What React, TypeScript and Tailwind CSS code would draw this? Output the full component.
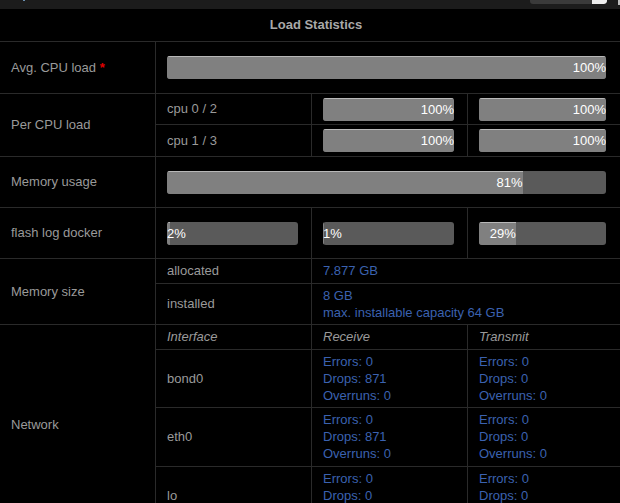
import React from "react";

const CELL = "bg-black flex items-center pl-[11px] text-[#9a9a9a]";

interface BarProps {
  pct: number;
  last?: boolean;
}

// Usage meter: dark track, lighter fill, value drawn at the end of the fill
function Bar({ pct }: BarProps) {
  return (
    <div className="relative h-[23px] w-full rounded-[3px] bg-[#5a5a5a] overflow-hidden">
      <div
        className="absolute inset-y-0 left-0 bg-[#808080] shadow-[inset_0_1px_0_#b8b8b8]"
        style={{ width: `${pct}%` }}
      />
      <div
        className="relative h-full min-w-fit flex items-center justify-end text-white leading-none whitespace-nowrap"
        style={{ width: `${pct}%` }}
      >
        {pct}%
      </div>
    </div>
  );
}

const NET = [
  { name: "bond0", rx: { errors: 0, drops: 871, overruns: 0 }, tx: { errors: 0, drops: 0, overruns: 0 } },
  { name: "eth0", rx: { errors: 0, drops: 871, overruns: 0 }, tx: { errors: 0, drops: 0, overruns: 0 } },
  { name: "lo", rx: { errors: 0, drops: 0, overruns: 0 }, tx: { errors: 0, drops: 0, overruns: 0 } },
];

function Counters({ c }: { c: { errors: number; drops: number; overruns: number } }) {
  return (
    <div className="self-start pt-[3px] leading-[17px] text-[#3b62b0]">
      <div>Errors: {c.errors}</div>
      <div>Drops: {c.drops}</div>
      <div>Overruns: {c.overruns}</div>
    </div>
  );
}

export default function App() {
  return (
    <div
      className="w-[620px] h-[503px] overflow-hidden bg-black text-[13px]"
      style={{ fontFamily: '"Liberation Sans", Arial, sans-serif' }}
    >
      {/* top bar, mostly scrolled away */}
      <div className="relative h-[9px] bg-[#1c1c1c] flex justify-end pr-[13px]">
        <div className="absolute left-[23px] top-0 w-[2px] h-[1px] bg-[#6a8fb0]" />
        <div className="flex h-[4px] w-[77px] rounded-b-[3px] bg-[#3a3a3a] overflow-hidden">
          <div className="ml-auto w-[15px] h-full bg-[#eeeeee] rounded-br-[3px]" />
        </div>
        <div className="absolute right-0 top-0 w-[2px] h-[5px] bg-[#bdbdbd]" />
      </div>

      <div className="grid grid-cols-[155px_155px_155px_1fr] grid-rows-[32px_51px_30px_31px_50px_50px_24px_40px_24px_57px_58px_58px] gap-px bg-[#2a2a2a]">
        <div className="col-span-4 bg-black flex items-center justify-center pl-[12px] font-bold text-[#a9a9a9]">
          Load Statistics
        </div>

        {/* Average CPU */}
        <div className={CELL}>
          Avg. CPU load&nbsp;<span className="font-bold text-[#e00000]">*</span>
        </div>
        <div className="col-span-3 bg-black flex items-center pl-[11px] pr-[14px]">
          <Bar pct={100} />
        </div>

        {/* Per CPU */}
        <div className={`${CELL} row-span-2`}>Per CPU load</div>
        <div className={CELL}>cpu 0 / 2</div>
        <div className="bg-black flex items-center pl-[11px] pr-[13px]">
          <Bar pct={100} />
        </div>
        <div className="bg-black flex items-center pl-[11px] pr-[14px]">
          <Bar pct={100} />
        </div>
        <div className={CELL}>cpu 1 / 3</div>
        <div className="bg-black flex items-center pl-[11px] pr-[13px]">
          <Bar pct={100} />
        </div>
        <div className="bg-black flex items-center pl-[11px] pr-[14px]">
          <Bar pct={100} />
        </div>

        {/* Memory */}
        <div className={CELL}>Memory usage</div>
        <div className="col-span-3 bg-black flex items-center pl-[11px] pr-[14px]">
          <Bar pct={81} />
        </div>

        {/* Filesystems */}
        <div className={CELL}>flash log docker</div>
        <div className="bg-black flex items-center pl-[11px] pr-[13px]">
          <Bar pct={2} />
        </div>
        <div className="bg-black flex items-center pl-[11px] pr-[13px]">
          <Bar pct={1} />
        </div>
        <div className="bg-black flex items-center pl-[11px] pr-[14px]">
          <Bar pct={29} />
        </div>

        {/* Memory size */}
        <div className={`${CELL} row-span-2`}>Memory size</div>
        <div className={CELL}>allocated</div>
        <div className="col-span-2 bg-black flex items-center pl-[11px] text-[#3b62b0]">7.877 GB</div>
        <div className={CELL}>installed</div>
        <div className="col-span-2 bg-black flex flex-col justify-center pl-[11px] leading-[17px] text-[#3b62b0]">
          <div>8 GB</div>
          <div>max. installable capacity 64 GB</div>
        </div>

        {/* Network */}
        <div className={`${CELL} row-span-4`}>Network</div>
        <div className={`${CELL} italic`}>Interface</div>
        <div className={`${CELL} italic`}>Receive</div>
        <div className={`${CELL} italic`}>Transmit</div>
        {NET.map((n) => (
          <React.Fragment key={n.name}>
            <div className={CELL}>{n.name}</div>
            <div className={CELL}>
              <Counters c={n.rx} />
            </div>
            <div className={CELL}>
              <Counters c={n.tx} />
            </div>
          </React.Fragment>
        ))}
      </div>
    </div>
  );
}
